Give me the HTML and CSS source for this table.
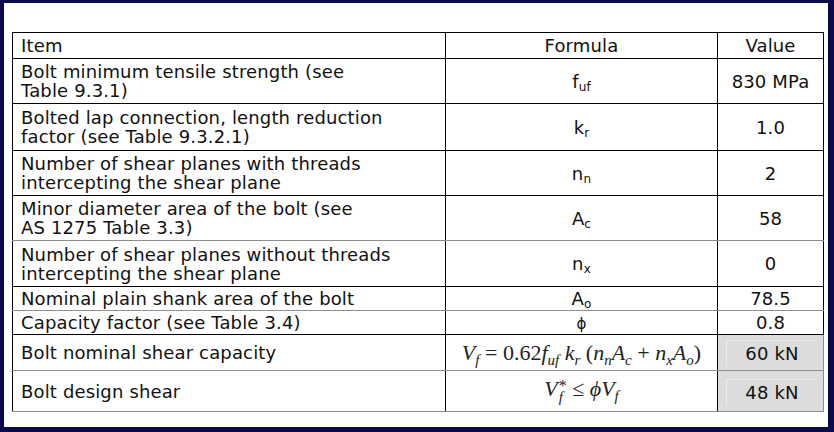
FILE: index.html
```html
<!DOCTYPE html>
<html>
<head>
<meta charset="utf-8">
<link rel="stylesheet" href="styles.css">
</head>
<body>
<div class="frame">
  <table class="calc">
    <colgroup>
      <col class="c-item">
      <col class="c-formula">
      <col class="c-value">
    </colgroup>
    <tr class="r-head">
      <td class="item">Item</td>
      <td class="formula">Formula</td>
      <td class="value">Value</td>
    </tr>
    <tr>
      <td class="item">Bolt minimum tensile strength (see<br>Table 9.3.1)</td>
      <td class="formula">f<sub>uf</sub></td>
      <td class="value">830 MPa</td>
    </tr>
    <tr class="r-47">
      <td class="item">Bolted lap connection, length reduction<br>factor (see Table 9.3.2.1)</td>
      <td class="formula">k<sub>r</sub></td>
      <td class="value">1.0</td>
    </tr>
    <tr>
      <td class="item">Number of shear planes with threads<br>intercepting the shear plane</td>
      <td class="formula">n<sub>n</sub></td>
      <td class="value">2</td>
    </tr>
    <tr class="gray-bottom">
      <td class="item">Minor diameter area of the bolt (see<br>AS 1275 Table 3.3)</td>
      <td class="formula">A<sub>c</sub></td>
      <td class="value">58</td>
    </tr>
    <tr class="r-46">
      <td class="item">Number of shear planes without threads<br>intercepting the shear plane</td>
      <td class="formula">n<sub>x</sub></td>
      <td class="value">0</td>
    </tr>
    <tr class="r-tight gray-bottom">
      <td class="item">Nominal plain shank area of the bolt</td>
      <td class="formula">A<sub>o</sub></td>
      <td class="value">78.5</td>
    </tr>
    <tr class="r-tight">
      <td class="item">Capacity factor (see Table 3.4)</td>
      <td class="formula"><span class="phi">&#981;</span></td>
      <td class="value">0.8</td>
    </tr>
    <tr class="r-eq1 gray-bottom">
      <td class="item">Bolt nominal shear capacity</td>
      <td class="formula"><span class="math"><i>V</i><sub><i>f</i></sub> = 0.62<i>f</i><sub><i>uf</i></sub> <i>k</i><sub><i>r</i></sub> (<i>n</i><sub><i>n</i></sub><i>A</i><sub><i>c</i></sub> + <i>n</i><sub><i>x</i></sub><i>A</i><sub><i>o</i></sub>)</span></td>
      <td class="value result"><span class="result-in">60 kN</span></td>
    </tr>
    <tr class="r-eq2 gray-bottom">
      <td class="item">Bolt design shear</td>
      <td class="formula"><span class="math"><i>V</i><span class="supsub"><span class="sp">*</span><span class="sb"><i>f</i></span></span> &le; <i>&#981;V</i><sub><i>f</i></sub></span></td>
      <td class="value result"><span class="result-in">48 kN</span></td>
    </tr>
  </table>
</div>
</body>
</html>
```

FILE: styles.css
```css
html, body {
  margin: 0;
  padding: 0;
  background: #0b0b4b;
}

.frame {
  width: 834px;
  height: 432px;
  box-sizing: border-box;
  border-style: solid;
  border-color: #0b0b4b;
  border-width: 3px 6px 5px 4px;
  background: #ffffff;
  padding: 29px 0 0 8px;
}

.calc {
  border-collapse: collapse;
  width: 811px;
  table-layout: fixed;
  font-family: "DejaVu Sans", Verdana, sans-serif;
  font-size: 18px;
  letter-spacing: 0.15px;
  line-height: 19px;
  color: #111111;
}

.c-item { width: 433px; }
.c-formula { width: 272px; }
.c-value { width: 106px; }

.calc td {
  border: 1px solid #000000;
  padding: 3px 8px;
  height: 19px;
  vertical-align: middle;
  white-space: nowrap;
}

.calc td.item { text-align: left; }
.calc td.formula, .calc td.value { text-align: center; padding: 3px 2px; }

.calc sub {
  font-size: 12px;
  line-height: 0;
  vertical-align: -3px;
}

.phi { font-size: 15px; line-height: 0; }

.r-47 td { padding-top: 4px; padding-bottom: 4px; }
.r-46 td { padding-top: 4px; padding-bottom: 3px; }
.r-tight td, .calc .r-tight td.formula, .calc .r-tight td.value { padding-top: 2px; padding-bottom: 2px; height: 19px; }

.gray-bottom td { border-bottom-color: #8e8e8e; }

.calc .r-eq1 td { height: 35px; padding-top: 0; padding-bottom: 0; }
.calc .r-eq2 td { height: 40px; padding-top: 0; padding-bottom: 0; }

.math {
  font-family: "Liberation Serif", "Times New Roman", serif;
  font-size: 22px;
  letter-spacing: 0;
  color: #222222;
  white-space: nowrap;
}

.math sub {
  font-size: 15px;
  vertical-align: -5px;
}

.supsub {
  display: inline-block;
  vertical-align: -6px;
  line-height: 11px;
  margin-left: 1px;
  text-align: left;
}

.supsub .sp { display: block; font-size: 16px; line-height: 11px; padding-top: 2px; }
.supsub .sb { display: block; font-size: 15px; line-height: 13px; }

.calc td.result {
  background: #dcdcdc;
  border-right-color: #8e8e8e;
  padding: 0;
}

.result-in {
  display: block;
  margin: 2px 6px 0 8px;
  border-top: 1px solid #ececec;
  border-left: 1px solid #ececec;
  line-height: 26px;
}
```
